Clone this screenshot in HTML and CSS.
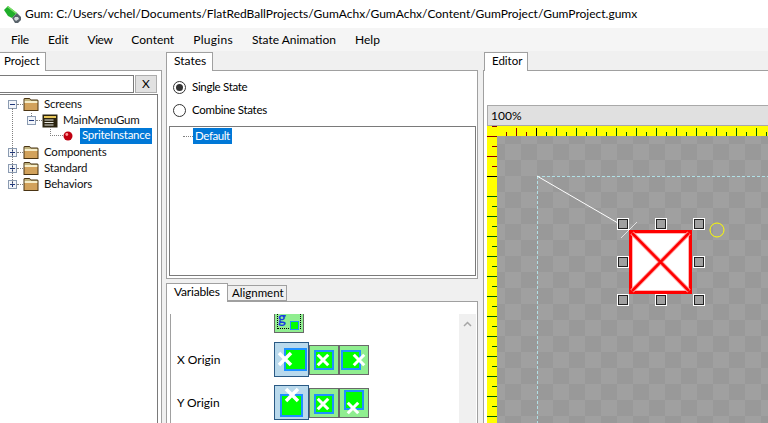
FILE: index.html
```html
<!DOCTYPE html>
<html lang="en">
<head>
  <meta charset="UTF-8">
  <title>Gum</title>
  <link rel="stylesheet" href="styles.css">
</head>
<body>
  <svg class="defs" width="0" height="0">
    <defs>
      <symbol id="folder" viewBox="0 0 16 16">
        <path d="M0.500 15v-12l1-1h5l1.500 1.500h6.500l1 1V15z" fill="#4a3413"/>
        <path d="M1.500 5h13v2h-13z" fill="#f6eecb"/>
        <path d="M1.500 7h13v7h-13z" fill="#d2a25c"/>
        <path d="M1.500 3h5l1.500 1.500v0.500h-6.500z" fill="#bfb27e"/>
        <path d="M1.500 4.500h13v0.500h-13z" fill="#bfb27e"/>
      </symbol>
      <symbol id="plus" viewBox="0 0 9 9">
        <rect x="0.500" y="0.500" width="8" height="8" fill="#f2f5fa" stroke="#8b9bb1"/>
        <path d="M2 4.500h5M4.500 2v5" stroke="#20387a"/>
      </symbol>
      <symbol id="minus" viewBox="0 0 9 9">
        <rect x="0.500" y="0.500" width="8" height="8" fill="#f2f5fa" stroke="#8b9bb1"/>
        <path d="M2 4.500h5" stroke="#20387a"/>
      </symbol>
      <symbol id="cross" viewBox="0 0 16 16">
        <path d="M2 2l12 12M14 2L2 14" stroke="#fff" stroke-width="3.500"/>
      </symbol>
      <symbol id="handle" viewBox="0 0 12 12">
        <rect x="0.500" y="0.500" width="11" height="11" fill="none" stroke="#fff"/>
        <rect x="1.500" y="1.500" width="9" height="9" fill="#a0a0a0" stroke="#222"/>
      </symbol>
      <pattern id="checker" width="32" height="32" patternUnits="userSpaceOnUse" x="2" y="2">
        <rect width="32" height="32" fill="#a0a0a0"/>
        <rect x="16" width="16" height="16" fill="#999"/>
        <rect y="16" width="16" height="16" fill="#999"/>
      </pattern>
      <pattern id="ticksTop" width="20" height="10" patternUnits="userSpaceOnUse" x="59" y="0">
        <path d="M0.500 6v4M10.500 2v8" stroke="#006400"/>
      </pattern>
      <pattern id="ticksLeft" width="10" height="20" patternUnits="userSpaceOnUse" x="0" y="70">
        <path d="M0 0.500h10M5 10.500h5" stroke="#006400"/>
      </pattern>
    </defs>
  </svg>

  <div id="app">
    <div class="titlebar">
      <svg class="logo" width="17" height="17" viewBox="0 0 17 17">
        <path d="M0 4l4-4 9 7-5 5-4-2z" fill="#1fae2a"/>
        <path d="M3 1l1-1 9 7-1 1z" fill="#7fe06a"/>
        <path d="M8 12l5-5 4 4v3l-3 3h-3z" fill="#59636b"/>
        <path d="M11 11l3 0 1 2-3 2-2-2z" fill="#d5dade"/>
      </svg>
      <span>Gum: C:/Users/vchel/Documents/FlatRedBallProjects/GumAchx/GumAchx/Content/GumProject/GumProject.gumx</span>
    </div>

    <ul class="menu">
      <li class="m-file">File</li>
      <li>Edit</li>
      <li class="m-view">View</li>
      <li>Content</li>
      <li class="m-plugins">Plugins</li>
      <li>State Animation</li>
      <li>Help</li>
    </ul>

    <div class="main">
      <!-- left column -->
      <section class="col col-project">
        <div class="tabs"><span class="tab tab-project">Project</span></div>
        <div class="panel panel-project">
          <div class="search">
            <div class="search-input"></div>
            <div class="search-btn">X</div>
          </div>
          <div class="tree">
            <div class="node lvl0"><svg class="box"><use href="#minus"/></svg><svg class="ico"><use href="#folder"/></svg><span>Screens</span></div>
            <div class="node lvl1">
              <svg class="box"><use href="#minus"/></svg>
              <svg class="ico" viewBox="0 0 16 16">
                <path d="M0.500 2.500h15v13h-15z" fill="#2b2410"/>
                <path d="M2 4h12v2H2z" fill="#e8c75a"/>
                <path d="M2.500 7.500h9v1h-9zM2.500 10h9v1h-9zM2.500 12.500h9v1h-9z" fill="#e6e6e0"/>
              </svg>
              <span>MainMenuGum</span>
            </div>
            <div class="node lvl2">
              <svg class="ico dot" viewBox="0 0 10 10">
                <circle cx="5" cy="5" r="4.500" fill="#c00010"/>
                <circle cx="3.800" cy="3.500" r="1.400" fill="#ff9a9a"/>
              </svg>
              <span class="sel">SpriteInstance</span>
            </div>
            <div class="node lvl0"><svg class="box"><use href="#plus"/></svg><svg class="ico"><use href="#folder"/></svg><span>Components</span></div>
            <div class="node lvl0"><svg class="box"><use href="#plus"/></svg><svg class="ico"><use href="#folder"/></svg><span>Standard</span></div>
            <div class="node lvl0"><svg class="box"><use href="#plus"/></svg><svg class="ico"><use href="#folder"/></svg><span>Behaviors</span></div>
            <div class="tree-line line-a"></div>
            <div class="tree-line line-b"></div>
            <div class="tree-line line-c"></div>
          </div>
        </div>
      </section>

      <!-- middle column -->
      <section class="col col-states">
        <div class="tabs"><span class="tab tab-states">States</span></div>
        <div class="panel panel-states">
          <label class="radio"><i class="dot-on"></i><span>Single State</span></label>
          <label class="radio"><i></i><span>Combine States</span></label>
          <div class="list"><span class="list-dots"></span><span class="sel">Default</span></div>
        </div>

        <div class="tabs tabs-vars">
          <span class="tab tab-vars">Variables</span>
          <span class="tab tab-off">Alignment</span>
        </div>
        <div class="panel panel-vars">
          <div class="vars">
            <div class="vars-list">
              <div class="var-row var-cut">
                <div class="tile tile-g"><em></em><b>g</b><i></i></div>
              </div>
              <div class="var-row">
                <span class="var-name">X Origin</span>
                <div class="tile on xo-a"><i class="sq"></i><svg class="x"><use href="#cross"/></svg></div>
                <div class="tile xo-b"><i class="sq"></i><svg class="x"><use href="#cross"/></svg></div>
                <div class="tile xo-c"><i class="sq"></i><svg class="x"><use href="#cross"/></svg></div>
              </div>
              <div class="var-row">
                <span class="var-name">Y Origin</span>
                <div class="tile on yo-a"><i class="sq"></i><svg class="x"><use href="#cross"/></svg></div>
                <div class="tile yo-b"><i class="sq"></i><svg class="x"><use href="#cross"/></svg></div>
                <div class="tile yo-c"><i class="sq"></i><svg class="x"><use href="#cross"/></svg></div>
              </div>
            </div>
            <div class="scroll">
              <svg width="9" height="6" viewBox="0 0 9 6"><path d="M1 5l3.500-3.500L8 5" fill="none" stroke="#a6a6a6" stroke-width="1.500"/></svg>
            </div>
          </div>
        </div>
      </section>

      <!-- right column -->
      <section class="col col-editor">
        <div class="tabs"><span class="tab tab-editor">Editor</span></div>
        <div class="panel panel-editor">
          <div class="zoom">100%</div>
          <svg class="stage" width="281" height="297" viewBox="0 0 281 297">
            <rect width="281" height="297" fill="#ffff00"/>
            <rect x="10" y="10" width="271" height="287" fill="url(#checker)"/>
            <rect x="59" y="0" width="222" height="10" fill="url(#ticksTop)"/>
            <rect x="0" y="70" width="10" height="227" fill="url(#ticksLeft)"/>
            <path d="M19.500 6v4M29.500 2v8M39.500 6v4" stroke="#8b0000"/>
            <path d="M49.500 2v8" stroke="#000"/>
            <path d="M5 0.500h5M0 10.500h10M5 20.500h5M0 30.500h10M5 40.500h5" stroke="#8b0000"/>
            <path d="M0 50.500h10" stroke="#000"/>
            <path d="M50 50.500H281M50.500 50V297" stroke="#b0e0e6" stroke-dasharray="3 2"/>
            <path d="M50 50l93 54" stroke="#fff"/>
            <path d="M134 112l16-16M134 96l16 16" stroke="#fff" opacity="0.700"/>
            <rect x="143.500" y="105.500" width="60" height="61" fill="#fff" stroke="#ff0000" stroke-width="3"/>
            <rect x="145.500" y="107.500" width="56" height="57" fill="none" stroke="#ffb4b4"/>
            <path d="M145 107l57 58M202 107l-57 58" stroke="#ffa0a0" stroke-width="4.500"/>
            <path d="M145 107l57 58M202 107l-57 58" stroke="#ff0000" stroke-width="2.500"/>
            <use href="#handle" x="130" y="92" width="12" height="12"/>
            <use href="#handle" x="168" y="92" width="12" height="12"/>
            <use href="#handle" x="206" y="92" width="12" height="12"/>
            <use href="#handle" x="130" y="130" width="12" height="12"/>
            <use href="#handle" x="206" y="130" width="12" height="12"/>
            <use href="#handle" x="130" y="168" width="12" height="12"/>
            <use href="#handle" x="168" y="168" width="12" height="12"/>
            <use href="#handle" x="206" y="168" width="12" height="12"/>
            <circle cx="230" cy="104" r="7" fill="none" stroke="#ffff00"/>
          </svg>
        </div>
      </section>
    </div>
  </div>
</body>
</html>
```

FILE: styles.css
```css
*{
  margin: 0;
  padding: 0;
  box-sizing: border-box;
}
html, body{
  width: 768px;
  height: 423px;
  overflow: hidden;
}
body{
  font-family: Lato, "Noto Sans", sans-serif;
  font-size: 12px;
  color: #000;
  background: #f0f0f0;
}
.defs{
  position: absolute;
}
#app{
  display: flex;
  flex-direction: column;
  height: 423px;
}

.titlebar{
  display: flex;
  align-items: center;
  gap: 4px;
  height: 28px;
  padding-left: 4px;
  background: #fff;
  white-space: nowrap;
}
.titlebar span{
  margin-bottom: 2px;
}
.menu{
  display: flex;
  height: 23px;
  padding-left: 11px;
  align-items: center;
  list-style: none;
  background: #f5f5f5;
}
.menu li{
  margin-right: 19px;
}
.m-file{
  letter-spacing: -0.2px;
}
.m-view{
  letter-spacing: -0.5px;
}
.m-plugins{
  letter-spacing: 0.3px;
}

.main{
  display: flex;
  flex: 1;
  min-height: 0;
}
.col{
  display: flex;
  flex-direction: column;
  overflow: hidden;
}
.col-project{
  width: 162px;
}
.col-states{
  width: 321px;
  padding: 0 5px 0 4px;
}
.col-editor{
  flex: 1;
}

.tabs{
  display: flex;
  align-items: flex-end;
  height: 19px;
  flex: none;
}
.tab{
  height: 19px;
  line-height: 15px;
  padding: 0 5px;
  background: #fff;
  border: 1px solid #a0a0a0;
  border-bottom: 0;
  position: relative;
  top: 1px;
  white-space: nowrap;
}
.tab-project{
  width: 46px;
  padding-left: 4px;
  border-left: 0;
  font-size: 11.5px;
}
.tab-states{
  width: 47px;
  padding-left: 7px;
}
.tab-vars{
  width: 62px;
  padding-left: 7px;
  letter-spacing: -0.2px;
}
.tab-off{
  width: 59px;
  height: 16px;
  line-height: 13px;
  padding: 0 4px;
  background: #f0f0f0;
  border-left: 0;
  top: 0;
  border-bottom: 1px solid #a0a0a0;
  font-size: 11.5px;
}
.tab-editor{
  width: 44px;
  padding-left: 7px;
  margin-left: 1px;
  font-size: 11.5px;
}
.panel{
  background: #fff;
  border: 1px solid #a0a0a0;
}

.panel-project{
  flex: 1;
  padding: 4px 3px 0 0;
  border-left: 0;
  display: flex;
  flex-direction: column;
  border-bottom: 0;
}
.search{
  display: flex;
  gap: 1px;
  height: 18px;
  flex: none;
}
.search-input{
  width: 134px;
  border: 1px solid #7a7a7a;
  border-left: 0;
}
.search-btn{
  width: 22px;
  background: #e1e1e1;
  border: 1px solid #adadad;
  text-align: center;
  line-height: 15px;
}
.tree{
  flex: 1;
  margin-top: 1px;
  padding-top: 1px;
  border: 1px solid #7a7a7a;
  border-left: 0;
  border-bottom: 0;
  position: relative;
}
.node{
  display: flex;
  align-items: center;
  height: 16px;
  white-space: nowrap;
  color: #111;
  font-size: 11.5px;
  letter-spacing: -0.2px;
  position: relative;
}
.node span{
  margin-bottom: 2px;
}
.node::before{
  content: '';
  position: absolute;
  top: 8px;
  width: 6px;
  border-top: 1px dotted #808080;
}
.lvl0{
  padding-left: 8px;
}
.lvl0::before{
  left: 17px;
}
.lvl1{
  padding-left: 27px;
}
.lvl1::before{
  left: 36px;
}
.lvl2{
  padding-left: 63px;
}
.lvl2::before{
  display: none;
}
.box{
  width: 9px;
  height: 9px;
  flex: none;
  margin-right: 6px;
}
.ico{
  width: 16px;
  height: 16px;
  flex: none;
  margin-right: 5px;
}
.dot{
  width: 10px;
  height: 10px;
  margin-right: 7px;
}
.sel{
  background: #0078d7;
  color: #fff;
  padding: 0 2px;
  height: 16px;
  line-height: 15px;
}
.node .sel{
  margin-bottom: 0;
  line-height: 14px;
  letter-spacing: -0.25px;
}
.tree-line{
  position: absolute;
  border-left: 1px dotted #808080;
}
.line-a{
  left: 12px;
  top: 13px;
  height: 76px;
}
.line-b{
  left: 50px;
  top: 30px;
  height: 11px;
  width: 13px;
  border-bottom: 1px dotted #808080;
}
.line-c{
  left: 31px;
  top: 18px;
  height: 3px;
}

.panel-states{
  height: 209px;
  flex: none;
  padding: 5px 1px 0 2px;
}
.radio{
  display: flex;
  align-items: center;
  gap: 6px;
  height: 23px;
  padding-left: 4px;
}
.radio span{
  font-size: 11.5px;
  letter-spacing: -0.3px;
  margin-bottom: 2px;
}
.radio i{
  width: 13px;
  height: 13px;
  border: 1px solid #333;
  border-radius: 50%;
  background: #fff;
  position: relative;
}
.radio .dot-on::after{
  content: '';
  position: absolute;
  left: 2px;
  top: 2px;
  width: 7px;
  height: 7px;
  border-radius: 50%;
  background: #333;
}
.list{
  height: 150px;
  margin-top: 4px;
  padding: 1px 0 0 23px;
  border: 1px solid #7a7a7a;
  display: flex;
  align-items: flex-start;
  position: relative;
}
.list .sel{
  font-size: 11.5px;
  letter-spacing: -0.4px;
}
.list-dots{
  position: absolute;
  left: 13px;
  top: 9px;
  width: 10px;
  border-top: 1px dotted #808080;
}

.tabs-vars{
  height: 22px;
}
.panel-vars{
  flex: 1;
  padding: 12px 1px 0 3px;
  border-bottom: 0;
}
.vars{
  display: flex;
  height: 100%;
  border-left: 1px solid #a0a0a0;
}
.vars-list{
  flex: 1;
}
.var-row{
  display: flex;
  align-items: center;
  height: 35px;
  padding-left: 6px;
  margin-bottom: 8px;
}
.var-cut{
  height: 19px;
  align-items: flex-end;
  margin-bottom: 9px;
  padding-left: 103px;
}
.var-name{
  width: 97px;
}
.tile{
  width: 30px;
  height: 30px;
  background: #90ee90;
  border: 1px solid #696969;
  position: relative;
  flex: none;
}
.tile.on{
  width: 35px;
  height: 35px;
  background: #b9d9ec;
  border-color: #2a5a85;
}
.tile .sq{
  position: absolute;
  width: 20px;
  height: 20px;
  left: 4px;
  top: 4px;
  background: #00ff00;
  border: 2px solid #1e90ff;
}
.tile.on .sq{
  width: 23px;
  height: 23px;
}
.tile .x{
  position: absolute;
  left: 6px;
  top: 7px;
  width: 14px;
  height: 14px;
}
.tile.on .x{
  width: 16px;
  height: 16px;
}
.xo-a .sq{
  left: 9px;
  top: 5px;
}
.xo-a .x{
  left: 2px;
  top: 8px;
}
.xo-c .sq{
  left: 1px;
}
.xo-c .x{
  left: 12px;
}
.yo-a .sq{
  left: 5px;
  top: 8px;
}
.yo-a .x{
  left: 9px;
  top: 1px;
}
.yo-b .sq{
  top: 5px;
}
.yo-b .x{
  top: 8px;
}
.yo-c .sq{
  top: 1px;
}
.yo-c .x{
  top: 12px;
}
.tile-g{
  width: 30px;
  height: 19px;
  border-top: 0;
}
.tile-g em{
  position: absolute;
  left: 2px;
  right: 2px;
  top: 0;
  bottom: 3px;
  border: 1px dotted #000;
  border-top: 0;
}
.tile-g b{
  position: absolute;
  left: 3px;
  top: 0;
  color: #1b3fe0;
  font-size: 15px;
  line-height: 6px;
}
.tile-g i{
  position: absolute;
  left: 15px;
  bottom: 2px;
  width: 9px;
  height: 9px;
  background: #00ff00;
  border: 1px solid #1e90ff;
}
.scroll{
  width: 17px;
  background: #f0f0f0;
  display: flex;
  justify-content: center;
  align-items: flex-start;
  padding-top: 7px;
}

.panel-editor{
  flex: 1;
  padding: 34px 0 0 3px;
  border-right: 0;
  border-bottom: 0;
}
.zoom{
  height: 21px;
  line-height: 19px;
  padding-left: 3px;
  background: #e0e0e0;
  border: 1px solid #a9a9a9;
  border-right: 0;
}
.stage{
  display: block;
}
```
